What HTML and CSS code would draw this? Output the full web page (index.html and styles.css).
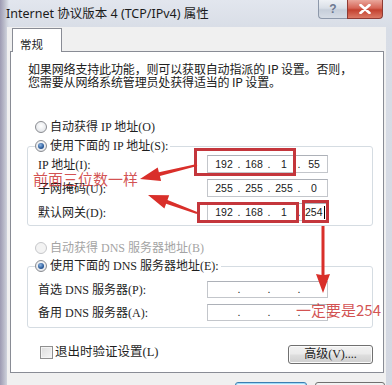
FILE: index.html
```html
<!DOCTYPE html>
<html lang="zh-CN">
<head>
<meta charset="utf-8">
<title>Internet 协议版本 4 (TCP/IPv4) 属性</title>
<link rel="stylesheet" href="styles.css">
</head>
<body>
<div class="window">
  <div class="titlebar">
    <span class="title">Internet 协议版本 4 (TCP/IPv4) 属性</span>
    <div class="caption">
      <span class="cbtn help">?</span>
      <span class="cbtn close">
        <svg width="12" height="10" viewBox="0 0 12 10"><path d="M1.5 1 L10.5 9 M10.5 1 L1.5 9" stroke="#fff" stroke-width="2.6" stroke-linecap="round"/></svg>
      </span>
    </div>
  </div>
  <div class="client">
    <div class="tabs"><span class="tab">常规</span></div>
    <div class="panel">
      <p class="intro">如果网络支持此功能，则可以获取自动指派的 IP 设置。否则，<br>您需要从网络系统管理员处获得适当的 IP 设置。</p>
      <div class="opt"><span class="radio"></span>自动获得 IP 地址(O)</div>
      <fieldset class="group g1">
        <legend class="opt"><span class="radio checked"></span>使用下面的 IP 地址(S):</legend>
        <div class="rows">
          <div class="row">
            <span class="lbl">IP 地址(I):</span>
            <div class="ip"><span class="oct">192</span><span class="dot">.</span><span class="oct">168</span><span class="dot">.</span><span class="oct">1</span><span class="dot">.</span><span class="oct">55</span></div>
          </div>
          <div class="row">
            <span class="lbl">子网掩码(U):</span>
            <div class="ip"><span class="oct">255</span><span class="dot">.</span><span class="oct">255</span><span class="dot">.</span><span class="oct">255</span><span class="dot">.</span><span class="oct">0</span></div>
          </div>
          <div class="row">
            <span class="lbl">默认网关(D):</span>
            <div class="ip"><span class="oct">192</span><span class="dot">.</span><span class="oct">168</span><span class="dot">.</span><span class="oct">1</span><span class="dot">.</span><span class="oct typing">254<span class="caret"></span></span></div>
          </div>
        </div>
      </fieldset>
      <div class="opt disabled"><span class="radio"></span>自动获得 DNS 服务器地址(B)</div>
      <fieldset class="group g2">
        <legend class="opt"><span class="radio checked"></span>使用下面的 DNS 服务器地址(E):</legend>
        <div class="rows">
          <div class="row">
            <span class="lbl">首选 DNS 服务器(P):</span>
            <div class="ip"><span class="oct"></span><span class="dot">.</span><span class="oct"></span><span class="dot">.</span><span class="oct"></span><span class="dot">.</span><span class="oct"></span></div>
          </div>
          <div class="row">
            <span class="lbl">备用 DNS 服务器(A):</span>
            <div class="ip"><span class="oct"></span><span class="dot">.</span><span class="oct"></span><span class="dot">.</span><span class="oct"></span><span class="dot">.</span><span class="oct"></span></div>
          </div>
        </div>
      </fieldset>
      <div class="bottomrow">
        <div class="check"><span class="box"></span>退出时验证设置(L)</div>
        <span class="btn adv">高级(V)....</span>
      </div>
    </div>
    <div class="dlgbtns">
      <span class="dbtn ok"></span>
      <span class="dbtn cancel"></span>
    </div>
  </div>

  <svg class="annot" width="392" height="385" viewBox="0 0 392 385">
    <g fill="none" stroke="#c4363c" stroke-width="3">
      <rect x="195.5" y="149.5" width="99" height="25"/>
      <rect x="198.5" y="203.5" width="99" height="18"/>
      <rect x="303.5" y="201.5" width="24" height="20"/>
    </g>
    <g fill="#d92f2a">
      <polygon points="140,179 157.7,167.4 158.9,172.3 196.8,164 197.2,166 159.9,176.1 161.1,181"/>
      <polygon points="148,195 169.2,195.3 167.5,200 197.3,212.1 196.7,213.9 166.1,203.8 164.4,208.5"/>
      <polygon points="321.5,226 324.5,226 324.5,275 330,274 323,293 316,274 321.5,275"/>
    </g>
  </svg>
  <span class="note note1">前面三位数一样</span>
  <span class="note note2">一定要是254</span>
</div>
</body>
</html>
```

FILE: styles.css
```css
* { box-sizing: border-box; margin: 0; padding: 0; }
html, body { width: 392px; height: 385px; overflow: hidden; }
body {
  font-family: "Liberation Serif", "Noto Sans CJK SC", serif;
  font-size: 12px;
  color: #1e1e1e;
  background: #d6dae3;
}
.window {
  position: relative;
  width: 392px;
  height: 385px;
  display: flex;
  flex-direction: column;
  overflow: hidden;
  background:
    linear-gradient(90deg, #9d9bb3 0, #b9bac9 4px, #cfd3dd 7px, rgba(216,221,230,0) 9px),
    linear-gradient(180deg, #e2e6ee 0, #d8dde6 30px, #d3d7e1 385px);
}
.titlebar {
  height: 27px;
  flex: none;
  display: flex;
  justify-content: space-between;
  align-items: flex-start;
  padding: 0 9px 0 6px;
}
.title {
  font-family: "Noto Sans", "Noto Sans CJK SC", sans-serif;
  font-size: 12.5px;
  line-height: 27px;
  color: #1b1b1b;
}
.caption { display: flex; }
.cbtn {
  height: 19px;
  display: flex;
  align-items: center;
  justify-content: center;
}
.help {
  width: 29px;
  border: 1px solid #8d98aa;
  border-top: none;
  border-right: none;
  border-radius: 0 0 0 4px;
  background: linear-gradient(#eef1f5, #d9dfe7 45%, #c6ceda 55%, #d6dce5);
  font-family: "Liberation Sans", sans-serif;
  font-size: 12px;
  font-weight: bold;
  color: #6d7891;
}
.close {
  width: 36px;
  border: 1px solid #8e3b34;
  border-top: none;
  border-radius: 0 0 4px 0;
  background: linear-gradient(#eaa79c, #d66556 45%, #c3412f 55%, #dc7a66);
}
.client {
  flex: 1;
  margin: 0 6px 0 7px;
  padding-top: 1px;
  background: #f0f0f0;
  display: flex;
  flex-direction: column;
}
.tabs { padding-left: 5px; display: flex; }
.tab {
  position: relative;
  z-index: 1;
  width: 50px;
  height: 24px;
  margin-bottom: -1px;
  padding: 8px 0 0 7px;
  background: #fff;
  border: 1px solid #898c95;
  border-bottom: none;
  font-family: "Noto Sans CJK SC", sans-serif;
  font-size: 11.5px;
  line-height: 14px;
  color: #1e1e1e;
}
.panel {
  width: 374px;
  height: 322px;
  margin-left: 3px;
  background: #fff;
  border: 1px solid #898c95;
  padding: 0 10px 0 16px;
  display: flex;
  flex-direction: column;
  align-items: flex-start;
}
.intro {
  margin-top: 10px;
  padding-left: 1px;
  font-family: "Noto Sans CJK SC", sans-serif;
  font-size: 12px;
  line-height: 13px;
  letter-spacing: -0.15px;
  white-space: nowrap;
  color: #202020;
}
.opt {
  display: flex;
  align-items: center;
  height: 16px;
  line-height: 16px;
  white-space: nowrap;
}
.panel > .opt { padding-left: 8px; }
.panel > .opt:first-of-type { margin-top: 31px; }
.radio {
  width: 12px;
  height: 12px;
  margin-right: 3px;
  border-radius: 50%;
  border: 1px solid #8a8c91;
  background: radial-gradient(circle at 50% 40%, #ffffff 0, #e9ebee 60%, #d4d7dc 100%);
  flex: none;
  display: flex;
  align-items: center;
  justify-content: center;
}
.radio.checked::after {
  content: "";
  width: 6px;
  height: 6px;
  border-radius: 50%;
  background: radial-gradient(circle at 40% 35%, #8fb6e3 0, #2a5b9a 60%, #163e75 100%);
}
.disabled { color: #a4a4a4; }
.disabled .radio { border-color: #c6c7ca; background: #f3f3f3; }
.group {
  width: 346px;
  border: 1px solid #d5dce2;
  border-radius: 3px;
  padding: 0;
}
.group legend { margin-left: 7px; padding-right: 2px; }
.g1 { margin-top: 3px; padding-bottom: 4px; }
.g2 { margin-top: 2px; padding-bottom: 6px; }
.panel > .disabled { margin-top: 14px; }
.rows {
  display: flex;
  flex-direction: column;
  padding-left: 10px;
}
.g1 .rows { padding-top: 1px; gap: 6px; }
.g2 .rows { padding-top: 6px; gap: 5px; }
.row { display: flex; align-items: center; }
.lbl { width: 169px; white-space: nowrap; }
.ip {
  width: 121px;
  height: 18px;
  border: 1px solid #c3c6cb;
  border-top-color: #adb1b8;
  display: flex;
  align-items: center;
  padding-left: 4px;
  font-family: "Liberation Sans", sans-serif;
  font-size: 10.5px;
  color: #1a1a1a;
}
.g2 .ip { height: 17px; }
.oct { width: 24px; text-align: center; }
.dot { width: 6px; text-align: center; }
.typing {
  text-align: left;
  padding-left: 3px;
  display: flex;
  align-items: center;
}
.caret {
  display: inline-block;
  width: 1px;
  height: 13px;
  margin-left: 1px;
  background: #000;
}
.bottomrow {
  margin-top: 17px;
  width: 347px;
  display: flex;
  justify-content: space-between;
  align-items: flex-start;
  padding-left: 13px;
}
.check {
  display: flex;
  align-items: center;
  height: 13px;
  font-size: 12.5px;
  line-height: 13px;
  margin-top: 1px;
}
.box {
  width: 13px;
  height: 13px;
  margin-right: 2px;
  border: 1px solid #8f8f8f;
  background: linear-gradient(135deg, #dcdcdc, #f6f6f6);
  box-shadow: inset 0 0 0 1px #f4f4f4;
}
.btn {
  width: 85px;
  height: 19px;
  margin-right: 1px;
  border: 1px solid #707070;
  border-radius: 3px;
  background: linear-gradient(#f2f2f2, #ebebeb 45%, #dddddd 55%, #cfcfcf);
  box-shadow: inset 0 0 0 1px #fbfbfb;
  font-size: 12px;
  line-height: 17px;
  text-align: center;
  color: #1e1e1e;
}
.dlgbtns {
  margin-top: 9px;
  display: flex;
  justify-content: flex-end;
  gap: 8px;
  padding-right: 1px;
}
.dbtn {
  height: 23px;
  border-radius: 3px;
}
.ok {
  width: 72px;
  border: 1px solid #3c7fb1;
  background: linear-gradient(#eaf6fd, #d9f0fc);
  box-shadow: inset 0 0 0 1px #9fdaf8;
}
.cancel {
  width: 70px;
  border: 1px solid #707070;
  background: linear-gradient(#f2f2f2, #ebebeb);
}
.annot {
  position: absolute;
  left: 0;
  top: 0;
  pointer-events: none;
}
.note {
  position: absolute;
  font-family: "Noto Sans CJK SC", sans-serif;
  font-size: 15px;
  line-height: 18px;
  color: rgba(203, 52, 52, 0.85);
  white-space: nowrap;
}
.note1 { left: 33px; top: 170px; }
.note2 { left: 296px; top: 301px; }
```
